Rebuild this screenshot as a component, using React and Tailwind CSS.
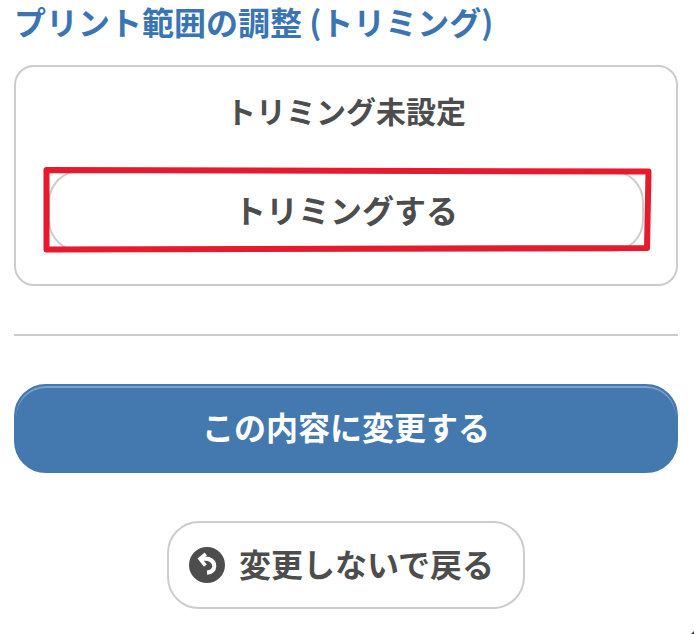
import React from 'react';

/** Hand-drawn marker frame laid over the trimming button. */
function MarkerFrame() {
  return (
    <svg className="absolute -left-[6px] -top-[4px] w-[612px] h-[88px] pointer-events-none" viewBox="0 0 612 88" fill="none">
      <path d="M4.5 4 L606.5 5.5 L605 82 L4.5 83.5 Z" stroke="#e8192c" strokeWidth="6" strokeLinejoin="round" />
    </svg>
  );
}

/** Round badge with a counter-clockwise arrow. */
function BackIcon() {
  return (
    <svg className="w-9 h-9 shrink-0" viewBox="0 0 36 36" fill="none">
      <circle cx="18" cy="18" r="18" fill="#4d4d4d" />
      <path d="M16.8 7 L11 11.8 L16.4 18.6" stroke="#fff" strokeWidth="3.6" />
      <path d="M11.5 12 C14 11.6 17 11.2 19.5 12.1 C23.3 13.4 25.3 16 25.2 19.4 C25 23.2 22.2 25.3 18 25.6" stroke="#fff" strokeWidth="4.2" />
    </svg>
  );
}

export default function App() {
  return (
    <main
      lang="ja"
      className="relative h-[634px] bg-white pl-[14px] pr-4 text-[#4d4d4d] font-bold font-['Noto_Sans_CJK_JP',sans-serif]"
    >
      <h1 className="h-[65px] pt-[5px] text-[32px] leading-8 font-bold text-[#3a74b3] whitespace-nowrap">
        プリント範囲の調整 (トリミング)
      </h1>

      <section className="h-[221px] rounded-[20px] border-2 border-[#ccc] px-8 pt-[27px]">
        <p className="text-center text-[30px] leading-8">トリミング未設定</p>
        <div className="relative mt-11">
          <button className="w-[596px] h-[82px] rounded-[32px] border-2 border-[#ccc] pb-1 text-[32px] leading-8">
            トリミングする
          </button>
          <MarkerFrame />
        </div>
      </section>

      <hr className="mt-12 border-t-2 border-[#ccc]" />

      <button className="mt-12 block w-full h-[89px] rounded-[32px] border-2 border-[#4479af] bg-[#4479af] pb-1.5 text-[32px] leading-8 text-white shadow-[inset_0_2px_0_#7ba2c8]">
        この内容に変更する
      </button>

      <button className="mx-auto mt-12 flex w-[358px] h-[88px] items-center gap-[14px] rounded-[32px] border-2 border-[#ccc] pl-5 text-[32px] leading-8 whitespace-nowrap">
        <BackIcon />
        <span className="pb-1">変更しないで戻る</span>
      </button>

      {/* edge of the rounded window corner */}
      <span className="absolute right-0 bottom-0 w-[3px] h-[3px] bg-[#333] [clip-path:polygon(100%_0,100%_100%,0_100%)]" />
    </main>
  );
}
